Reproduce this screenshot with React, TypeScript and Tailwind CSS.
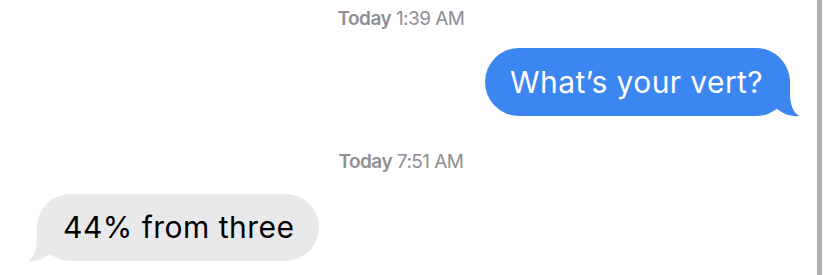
function Tail({ color, flip }: { color: string; flip?: boolean }) {
  return (
    <svg
      width="30"
      height="38"
      viewBox="0 0 30 38"
      className={flip ? 'absolute left-[-10px] bottom-[-1px] -scale-x-100' : 'absolute right-[-10px] bottom-[-1px]'}
      aria-hidden="true"
    >
      <path d="M0 0 L20 0 L20 14 C20 26 23 33 29 37 C22 38 12 35 5 28 C3 30 1 31 0 31 Z" fill={color} />
    </svg>
  )
}

function Stamp({ day, time }: { day: string; time: string }) {
  return (
    <div className="pr-[15px] text-center text-[19px] leading-[22px] tracking-[-0.55px] text-[#8e8e93]">
      <span className="font-semibold">{day}</span> {time}
    </div>
  )
}

export default function App() {
  return (
    <div className="flex h-[275px] w-[827px] bg-white" style={{ fontFamily: 'Inter, "Liberation Sans", sans-serif' }}>
      <main className="flex flex-1 flex-col">
        <div className="pt-[8px]">
          <Stamp day="Today" time="1:39 AM" />
        </div>
        <div className="mt-[18px] flex justify-end pr-[27px]">
          <div className="relative flex h-[68px] items-center rounded-full bg-[#3b86f0] pl-[25px] pr-[27px]">
            <Tail color="#3b86f0" />
            <span className="relative text-[30px] tracking-[0.4px] text-white">What’s your vert?</span>
          </div>
        </div>
        <div className="mt-[35px]">
          <Stamp day="Today" time="7:51 AM" />
        </div>
        <div className="mt-[21px] flex pl-[37px]">
          <div className="relative flex h-[67px] items-center rounded-full bg-[#e9e9eb] pl-[26px] pr-[24px]">
            <Tail color="#e9e9eb" flip />
            <span className="relative text-[30px] tracking-[0.5px] text-black">44% from three</span>
          </div>
        </div>
      </main>
      <div className="mr-[5px] w-[5px] bg-[#b0b0b0]" />
    </div>
  )
}
